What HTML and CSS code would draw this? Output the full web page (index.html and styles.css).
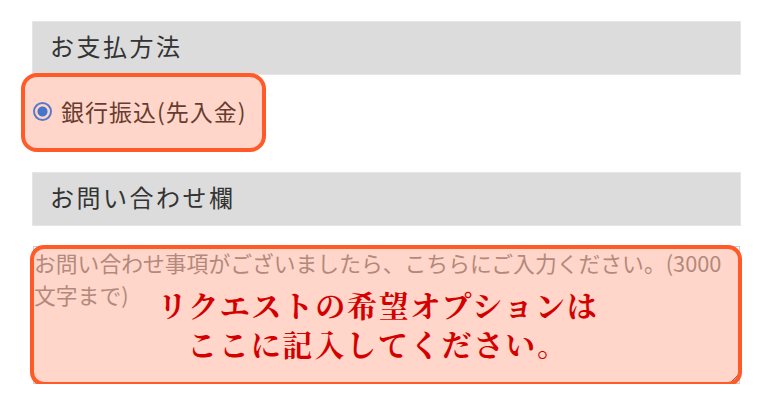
FILE: index.html
```html
<!DOCTYPE html>
<html lang="ja">
<head>
  <meta charset="UTF-8" />
  <meta name="viewport" content="width=device-width, initial-scale=1.0"/>
  <title>お支払方法</title>
  <link rel="stylesheet" href="styles.css">
</head>
<body>
  <div class="form">
    <h3 class="section-title">お支払方法</h3>

    <div class="options">
      <label class="option">
        <input type="radio" name="payment" checked />
        銀行振込(先入金)
        <span class="mark"></span>
      </label>
    </div>

    <h3 class="section-title">お問い合わせ欄</h3>

    <div class="message">
      <textarea placeholder="お問い合わせ事項がございましたら、こちらにご入力ください。(3000&#10;文字まで)"></textarea>
      <div class="mark note">
        <p>リクエストの希望オプションは</p>
        <p>ここに記入してください。</p>
      </div>
    </div>
  </div>
</body>
</html>
```

FILE: styles.css
```css
body {
  font-family: 'Noto Sans CJK JP', 'Noto Sans', sans-serif;
  margin: 0;
  background: #fff;
  color: #333;
}
.form {
  width: 707px;
  padding: 22px 0 0 33px;
}
.section-title {
  margin: 0;
  height: 52px;
  line-height: 48px;
  padding-left: 17px;
  background: #dcdcdc;
  box-shadow: 0 0 0 1px #e6e6e6;
  font-size: 24px;
  font-weight: normal;
  letter-spacing: 2.5px;
  color: #333;
}
.options {
  padding: 20px 0 45px;
}
.option {
  position: relative;
  display: inline-flex;
  align-items: center;
  gap: 9px;
  height: 34px;
  font-size: 23px;
  letter-spacing: 1px;
  color: #333;
}
.option input {
  appearance: none;
  margin: 0;
  width: 19px;
  height: 19px;
  border: 2px solid #1f86ff;
  border-radius: 50%;
  background: radial-gradient(circle, #0b7cff 0 4.5px, #fff 5.5px);
}
.mark {
  position: absolute;
  border: 4px solid #ff5a28;
  border-radius: 16px;
  background: rgba(255, 90, 40, 0.25);
  pointer-events: none;
}
.option .mark {
  inset: -21px -19px -24px -12px;
}
.message {
  position: relative;
  margin-top: 21px;
}
.message textarea {
  display: block;
  box-sizing: border-box;
  width: 707px;
  height: 138px;
  margin: 0;
  padding: 0;
  border: 1px solid #ccc;
  font-family: inherit;
  font-size: 21.8px;
  line-height: 32px;
  white-space: pre-wrap;
}
.message textarea::placeholder {
  color: #999;
}
.note {
  inset: -1px -2px -2px -3px;
  border-radius: 14px;
  padding: 36px 16px 0 0;
  text-align: center;
  font-family: 'Noto Serif CJK JP', 'Noto Sans CJK JP', serif;
  font-size: 30px;
  font-weight: bold;
  line-height: 39px;
  color: #d40000;
}
.note p {
  margin: 0;
  letter-spacing: 1.8px;
}
```
